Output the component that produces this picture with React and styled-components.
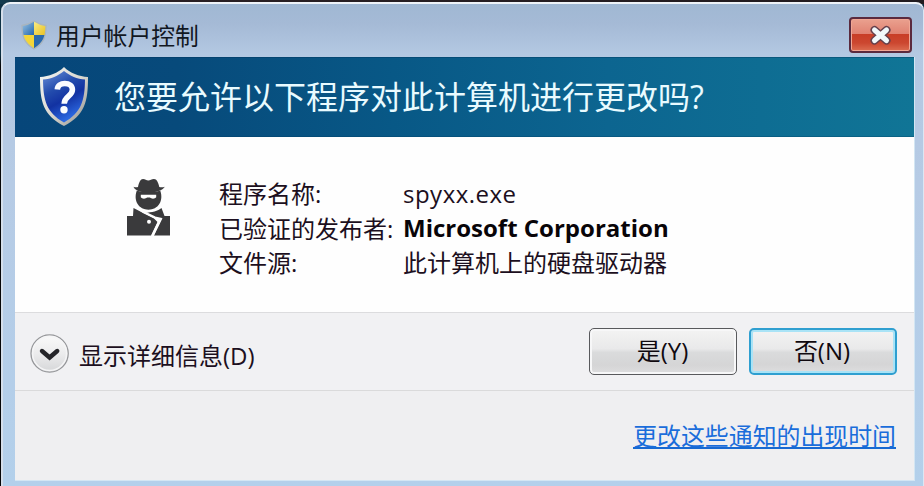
import React from "react";
import styled, { createGlobalStyle } from "styled-components";

const GlobalStyle = createGlobalStyle`
  * { box-sizing: border-box; }
  body {
    margin: 0;
    overflow: hidden;
    background: #0b0c10;
  }
`;

const Desktop = styled.div`
  width: 924px;
  height: 486px;
  padding: 2px 0 0 1px;
  overflow: hidden;
  background: linear-gradient(90deg, #123c50 0, #2a2024 60px, #211c20 100%) 0 0 / 100% 4px no-repeat,
    linear-gradient(180deg, #0d3145 0, #0d3145 54px, #050608 66px);
  font-family: "Open Sans", "Noto Sans CJK SC", sans-serif;
  font-size: 24px;
  line-height: 34px;
  color: #1c0f20;
  white-space: nowrap;
`;

const Window = styled.main`
  width: 923px;
  height: 490px;
  padding: 0 8px 0 12px;
  border: 2px solid #eef3f8;
  border-right: 1px solid #dbe7f3;
  border-left-color: #d5dfeb;
  border-radius: 9px 8px 0 0;
  background: linear-gradient(180deg, #a0b8d3 0, #a5bad6 20px, #b3c8e2 50px, #b6cbe5 180px, #b3d0eb 100%);
`;

const TitleBar = styled.header`
  display: flex;
  align-items: center;
  height: 53px;
  padding: 9px 3px 0 5px;
`;

const TitleText = styled.h1`
  margin: 0 auto 0 8px;
  padding-top: 2px;
  font-size: 23.8px;
  font-weight: 400;
  line-height: 32px;
  color: #111722;
`;

const CloseButton = styled.button`
  display: grid;
  place-items: center;
  width: 63px;
  height: 36px;
  padding: 0;
  border: 2px solid #5b2a3e;
  border-radius: 4px;
  background: linear-gradient(180deg, #eaa18f 0, #e08272 46%, #c83d26 47%, #cc4730 75%, #dc6e52 100%);
  box-shadow: inset 0 0 0 1px #f0a795;
`;

const Panel = styled.section`
  width: 900px;
  border: solid #d3e6f3;
  border-width: 0 1px 1px 0;
`;

const Banner = styled.div`
  display: flex;
  align-items: center;
  height: 80px;
  padding-left: 24px;
  background: linear-gradient(90deg, #06467a 0, #074a7b 18%, #085886 42%, #0c6590 66%, #107596 100%);
  box-shadow: inset 0 1px 0 rgba(0, 50, 85, 0.35), inset 0 -1px 0 rgba(0, 60, 95, 0.3);
`;

const Question = styled.h2`
  margin: 0 0 0 25px;
  font-size: 32px;
  font-weight: 400;
  line-height: 46px;
  color: #e9fbff;
`;

const Details = styled.div`
  display: flex;
  height: 175px;
  padding: 41px 0 0 111px;
  background: #fefefe;
`;

const InfoGrid = styled.dl`
  display: grid;
  grid-template-columns: 184px auto;
  grid-auto-rows: 34.5px;
  margin: -1px 0 0 47px;
`;

const Label = styled.dt`
  margin: 0;
`;

const Value = styled.dd`
  margin: 0;
  font-weight: ${(p) => (p.$strong ? 700 : 400)};
  letter-spacing: ${(p) => p.$spacing || 0}px;
  line-height: ${(p) => (p.$strong ? 32 : 34)}px;
  color: ${(p) => (p.$strong ? "#080408" : "inherit")};
`;

const Actions = styled.div`
  display: flex;
  align-items: center;
  height: 78px;
  padding: 0 17px 0 15px;
  border-top: 1px solid #dcdcde;
  background: #f1f1f3;
`;

const Disclosure = styled.button`
  display: flex;
  align-items: center;
  gap: 9px;
  margin: 4px auto 0 0;
  padding: 0;
  border: 0;
  background: none;
  font: inherit;
  color: inherit;
`;

const DisclosureText = styled.span`
  padding-top: 4px;
`;

const DialogButton = styled.button`
  width: 148px;
  height: 47px;
  margin-left: ${(p) => (p.$focused ? 12 : 0)}px;
  padding: 0 ${(p) => (p.$focused ? 2 : 1)}px 1px 0;
  border: ${(p) => (p.$focused ? "2px solid #2f9fd0" : "1px solid #58595c")};
  border-radius: 5px;
  background: linear-gradient(180deg, #f3f3f3 0, #e9e9ea 44%, #dadbdc 52%, #d5d5d6 80%, #dededf 100%);
  box-shadow: inset 0 0 0 ${(p) => (p.$focused ? "2px #a9e3f6" : "2px #f7f7f8")};
  font: inherit;
  color: #10090f;
`;

const Footer = styled.footer`
  display: flex;
  justify-content: flex-end;
  height: 90px;
  padding: 28px 18px 0 0;
  border-top: 1px solid #dadadb;
  background: #efeff1;
`;

const SettingsLink = styled.a`
  height: 30px;
  border-bottom: 2px solid #1769d2;
  font-size: 23.9px;
  line-height: 33px;
  color: #1a6ddb;
`;

function UacShield() {
  return (
    <svg width="28" height="30" viewBox="0 0 28 30">
      <defs>
        <clipPath id="uac-clip">
          <path d="M14 1C11 3 7 5 2 5.500c0 11 2 17.500 12 23.500 10-6 12-12.500 12-23.500-5-.5-9-2.500-12-4.500z" />
        </clipPath>
        <linearGradient id="uac-blue" x1="0" y1="0" x2="1" y2="1">
          <stop offset="0" stopColor="#b0d4ef" />
          <stop offset="1" stopColor="#2267ac" />
        </linearGradient>
        <linearGradient id="uac-gold" x1="0" y1="0" x2="1" y2="1">
          <stop offset="0" stopColor="#f9ee8b" />
          <stop offset="1" stopColor="#e7bd18" />
        </linearGradient>
      </defs>
      <g clipPath="url(#uac-clip)">
        <rect width="14" height="15" fill="url(#uac-blue)" />
        <rect x="14" width="14" height="15" fill="url(#uac-gold)" />
        <rect y="15" width="14" height="15" fill="#f3d539" />
        <rect x="14" y="15" width="14" height="15" fill="#2a69ac" />
      </g>
      <path
        d="M14 1C11 3 7 5 2 5.500c0 11 2 17.500 12 23.500 10-6 12-12.500 12-23.500-5-.5-9-2.500-12-4.500z"
        fill="none"
        stroke="#a9b5be"
        strokeWidth="1.3"
      />
    </svg>
  );
}

function QuestionShield() {
  return (
    <svg width="50" height="60" viewBox="0 0 50 60">
      <defs>
        <linearGradient id="shield-rim" x1="0" y1="0" x2="1" y2="1">
          <stop offset="0" stopColor="#f4f6f6" />
          <stop offset=".55" stopColor="#d7d5cd" />
          <stop offset="1" stopColor="#8d8c8a" />
        </linearGradient>
        <linearGradient id="shield-fill" x1="0" y1="0" x2=".45" y2="1">
          <stop offset="0" stopColor="#6c91da" />
          <stop offset=".4" stopColor="#234cad" />
          <stop offset=".65" stopColor="#1232a2" />
          <stop offset="1" stopColor="#2c69e2" />
        </linearGradient>
      </defs>
      <path
        d="M25 0C19 6 10 9.500 1 10c0 25 3 38 24 49 21-11 24-24 24-49-9-.5-18-4-24-10z"
        fill="url(#shield-rim)"
      />
      <path
        d="M25 4C19 9 12 12 4 12.600c.3 21 3.500 33 21 43 17.500-10 20.700-22 21-43-8-.6-15-3.600-21-8.600z"
        fill="url(#shield-fill)"
      />
      <path
        d="M18.300 22.500c.3-4 3.500-6 7.500-6 4.500 0 7.600 2.300 7.600 6.200 0 6.500-8.200 6.300-8.200 14"
        fill="none"
        stroke="#fafcff"
        strokeWidth="5.600"
      />
      <circle cx="25" cy="42.700" r="3.700" fill="#fafcff" />
    </svg>
  );
}

function CloseGlyph() {
  return (
    <svg width="26" height="22" viewBox="0 0 26 22">
      <g fill="none" strokeLinecap="round">
        <path d="M6.500 6l12 10.500M18.500 6l-12 10.500" stroke="#65404c" strokeWidth="8" />
        <path d="M6.500 6l12 10.500M18.500 6l-12 10.500" stroke="#f1f7fa" strokeWidth="5" />
      </g>
    </svg>
  );
}

function SpyIcon() {
  return (
    <svg width="46" height="60" viewBox="0 0 46 60">
      <g fill="#3a3a3c">
        <path d="M12 9C13 4.500 14.500 1 17 1c2.300 0 3.300 1.500 5.300 1.500S25.500 1 28 1c2.700 0 4.300 3.500 5.300 8 2 .6 4 .3 5.500-.3-2 3.800-9 5.800-16.500 5.800S9 12.700 7.500 8.700c1.200.6 2.900.7 4.500.3z" />
        <path d="M10.800 12.500C16 14.500 29 14.500 34.200 12.500 38 23 32 31.700 22.500 31.700S7 23 10.800 12.500z" />
        <path d="M1 38h6l.5-8L28 40.500 31.500 44 25 57.500H1z" />
        <path d="M19 34.800C26 34.500 32 33 35.500 30L38.500 38H44v19.500H28l8.500-17.200-7-.5z" />
      </g>
      <path d="M14.800 16.800h15.400v2.500c-1 1.800-5 1.800-6.200.3h-3c-1.200 1.500-5.200 1.500-6.200-.3z" fill="#fff" />
      <path d="M9 28l8.500 6 11.500 5.500 5.500 1.200-8 17" fill="none" stroke="#fefefe" strokeWidth="2.200" />
      <circle cx="23" cy="43.800" r="2" fill="#fff" />
    </svg>
  );
}

function ChevronCircle() {
  return (
    <svg width="40" height="40" viewBox="0 0 40 40">
      <defs>
        <linearGradient id="circle-fill" x1="0" y1="0" x2="0" y2="1">
          <stop offset="0" stopColor="#fafafa" />
          <stop offset=".5" stopColor="#ececed" />
          <stop offset="1" stopColor="#d5d6d8" />
        </linearGradient>
      </defs>
      <circle cx="19.600" cy="19.500" r="18.600" fill="url(#circle-fill)" stroke="#96979a" strokeWidth="1.300" />
      <circle cx="19.600" cy="19.500" r="17" fill="none" stroke="#f5f5f6" strokeWidth="1.500" />
      <path d="M12 17l7.600 6.500 7.600-6.500" fill="none" stroke="#252529" strokeWidth="4.400" strokeLinecap="round" />
    </svg>
  );
}

export default function App() {
  return (
    <>
      <GlobalStyle />
      <Desktop>
        <Window>
          <TitleBar>
            <UacShield />
            <TitleText>用户帐户控制</TitleText>
            <CloseButton aria-label="关闭">
              <CloseGlyph />
            </CloseButton>
          </TitleBar>
          <Panel>
            <Banner>
              <QuestionShield />
              <Question>您要允许以下程序对此计算机进行更改吗?</Question>
            </Banner>
            <Details>
              <SpyIcon />
              <InfoGrid>
                <Label>程序名称:</Label>
                <Value $spacing={0.5}>spyxx.exe</Value>
                <Label>已验证的发布者:</Label>
                <Value $strong>Microsoft Corporation</Value>
                <Label>文件源:</Label>
                <Value>此计算机上的硬盘驱动器</Value>
              </InfoGrid>
            </Details>
            <Actions>
              <Disclosure>
                <ChevronCircle />
                <DisclosureText>显示详细信息(D)</DisclosureText>
              </Disclosure>
              <DialogButton>是(Y)</DialogButton>
              <DialogButton $focused>否(N)</DialogButton>
            </Actions>
            <Footer>
              <SettingsLink>更改这些通知的出现时间</SettingsLink>
            </Footer>
          </Panel>
        </Window>
      </Desktop>
    </>
  );
}
